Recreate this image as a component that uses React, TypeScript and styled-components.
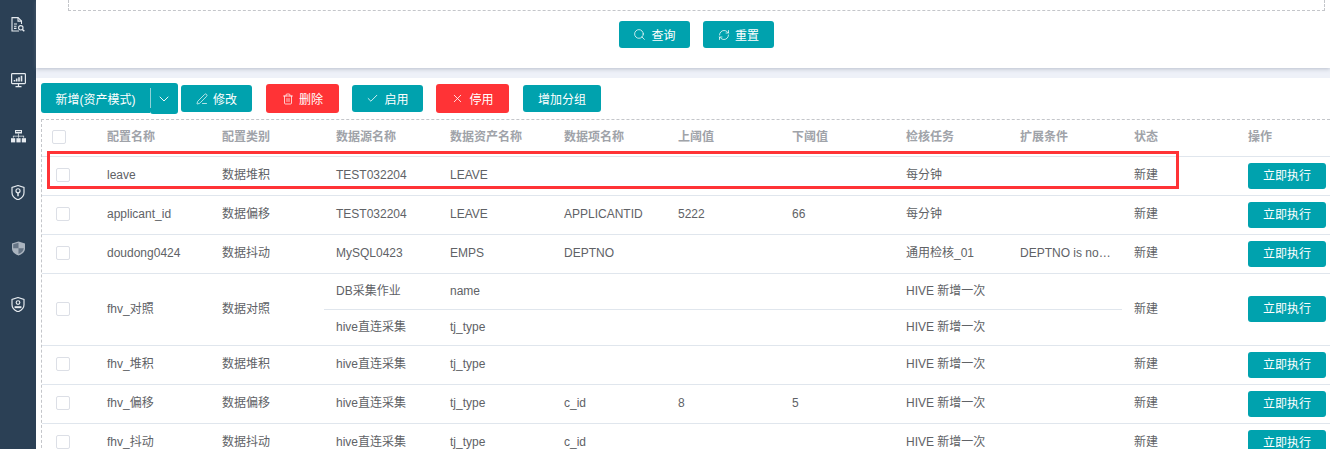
import React from "react";
import styled, { createGlobalStyle } from "styled-components";
import { Search, RefreshCw, PenLine, Trash2, Check, X, ChevronDown } from "lucide-react";

const Global = createGlobalStyle`
  html, body { margin: 0; padding: 0; height: 449px; overflow: hidden; background: #fff; }
  body { font-family: "Liberation Sans", "Noto Sans CJK SC", Arial, sans-serif; font-size: 12px; color: #606266; }
`;

const Page = styled.div`
  display: flex;
  width: 1330px;
  height: 449px;
  overflow: hidden;
  position: relative;
`;
const Sidebar = styled.nav`
  flex: 0 0 36px;
  background: #2b4055;
  display: flex;
  flex-direction: column;
  align-items: center;
  padding-top: 16px;
  gap: 40px;
`;
const NavItem = styled.div<{ $dim?: boolean }>`
  width: 16px;
  height: 16px;
  color: ${(p) => (p.$dim ? "#aab4bf" : "#e6ebf0")};
  display: flex;
  align-items: center;
  justify-content: center;
`;
const Main = styled.main`
  flex: 1;
  min-width: 0;
  display: flex;
  flex-direction: column;
  background: #eef1f8;
`;
const SearchPanel = styled.section`
  flex: none;
  height: 68px;
  background: #fff;
  box-shadow: 0 1px 4px rgba(120, 130, 150, 0.45);
  padding: 0 5px 0 32px;
  box-sizing: border-box;
  position: relative;
`;
const FormBox = styled.div`
  height: 11px;
  box-sizing: border-box;
  border: 1px dashed #c4c6ca;
  border-top: none;
`;
const SearchActions = styled.div`
  display: flex;
  justify-content: center;
  gap: 13px;
  margin-top: 10px;
`;
const Button = styled.button<{ $w: number; $h?: number; $danger?: boolean; $ml?: number }>`
  width: ${(p) => p.$w}px;
  height: ${(p) => p.$h ?? 27}px;
  margin-left: ${(p) => p.$ml ?? 0}px;
  padding: 0;
  border: none;
  border-radius: 3px;
  background: ${(p) => (p.$danger ? "#ff3336" : "#00a2ae")};
  color: #fff;
  font: inherit;
  font-size: 12px;
  display: inline-flex;
  align-items: center;
  justify-content: center;
  gap: 5px;
  flex: none;
`;
const ResultPanel = styled.section`
  margin-top: 10px;
  flex: 1;
  background: #fff;
  padding: 5px 0 0 5px;
`;
const Toolbar = styled.div`
  display: flex;
  align-items: center;
  height: 31px;
  gap: 3px;
`;
const Split = styled.div`
  display: flex;
  align-items: flex-start;
  height: 31px;
`;
const SplitMain = styled.button`
  width: 109px;
  height: 30px;
  border: none;
  padding: 0;
  border-radius: 3px 0 0 3px;
  background: #00a2ae;
  color: #fff;
  font: inherit;
`;
const SplitArrow = styled.button`
  position: relative;
  width: 28px;
  height: 31px;
  border: none;
  padding: 0;
  border-radius: 0 3px 3px 3px;
  background: #00a2ae;
  color: #fff;
  display: flex;
  align-items: center;
  justify-content: center;
  &::before {
    content: "";
    position: absolute;
    left: 0;
    top: 5px;
    width: 1px;
    height: 20px;
    background: #8fd2d8;
  }
`;
const ActionGroup = styled.div`
  display: flex;
  align-items: center;
  gap: 13px;
`;
const TableWrap = styled.div`
  margin-top: 5px;
  border-top: 1px dashed #c4c6ca;
  border-left: 1px dashed #c4c6ca;
`;
const Table = styled.table`
  width: 1288px;
  table-layout: fixed;
  border-collapse: separate;
  border-spacing: 0;
`;
const Th = styled.th`
  height: 37px;
  padding: 0 0 5px 12px;
  box-sizing: border-box;
  text-align: left;
  font-size: 12px;
  font-weight: 700;
  color: #a0a3a9;
  border-bottom: 1px solid #e0e6ed;
`;
const Td = styled.td<{ $h?: number }>`
  height: ${(p) => p.$h ?? 39}px;
  padding: 0 10px 2px 12px;
  box-sizing: border-box;
  color: #606266;
  font-size: 12px;
  line-height: 16px;
  border-bottom: 1px solid #e0e6ed;
  white-space: nowrap;
  overflow: hidden;
  text-overflow: ellipsis;
`;
const ActionCell = styled(Td)`
  padding: 0 0 1px 12px;
`;
const CheckBox = styled.span<{ $header?: boolean }>`
  display: block;
  width: 14px;
  height: 14px;
  box-sizing: border-box;
  border: 1px solid #dcdfe6;
  border-radius: 2px;
  background: #fff;
  margin-left: ${(p) => (p.$header ? 10 : 14)}px;
`;
const CheckTh = styled(Th)`
  padding: 0 0 3px 0;
`;
const CheckTd = styled(Td)`
  padding: 0 0 2px 0;
`;
const Highlight = styled.div`
  position: absolute;
  left: 47px;
  top: 151px;
  width: 1132px;
  height: 38px;
  box-sizing: border-box;
  border: 3px solid #ff3336;
  pointer-events: none;
`;

const IconDoc = () => (
  <svg width="14" height="15" viewBox="0 0 14 15" fill="none" stroke="currentColor" strokeWidth="1.1">
    <path d="M8 14H1V.6h6l3.500 3.500V7" />
    <path d="M7 .6v3.500h3.500" />
    <path d="M3 7h3M3 9.200h2.500M3 11.400h2.500" />
    <circle cx="9.800" cy="10.800" r="2.200" />
    <path d="M11.400 12.400l1.900 1.900" strokeWidth="1.400" />
  </svg>
);
const IconMonitor = () => (
  <svg width="15" height="15" viewBox="0 0 15 15" fill="none" stroke="currentColor">
    <rect x="0.6" y="0.6" width="13.8" height="10" rx="0.8" strokeWidth="1.2" />
    <path d="M3.500 8.500V7M5.700 8.500V5.500M8 8.500V4.200M10.500 8.500V2.800" strokeWidth="1.600" />
    <path d="M7.500 11v2.400M4.500 13.700h6" strokeWidth="1.200" />
  </svg>
);
const IconTree = () => (
  <svg width="15" height="13" viewBox="0 0 15 13" fill="currentColor">
    <path fillRule="evenodd" d="M4 0h7v3.600H4zM5 1v.8h5V1z" />
    <path d="M7.200 3.600h.7v2.200h5.200v2h-.7V6.500H7.900v1.300h-.7V6.500H2.600v1.300h-.7v-2h5.300z" />
    <rect x="0" y="8.200" width="4.200" height="4.200" />
    <rect x="5.400" y="8.200" width="4.200" height="4.200" />
    <rect x="10.800" y="8.200" width="4.200" height="4.200" />
  </svg>
);
const IconShieldKey = () => (
  <svg width="14" height="15" viewBox="0.8 0.3 12.400 14" fill="none" stroke="currentColor" strokeWidth="1.100">
    <path d="M7 0.800l5.600 1.800v5c0 3-2.400 5.200-5.600 6.600C3.800 12.800 1.400 10.600 1.400 7.600v-5z" />
    <circle cx="7" cy="5.700" r="1.900" />
    <path d="M7 7.600v3.200" strokeWidth="1.400" />
  </svg>
);
const IconShieldHalf = () => (
  <svg width="15" height="15" viewBox="0 0 15 15" fill="currentColor">
    <path d="M7.500 0.500L14 2.500v5c0 3.300-2.600 5.700-6.500 7C3.600 13.200 1 10.800 1 7.500v-5z" />
    <path d="M7.500 1.800v5.500H2.200V3.300zM7.500 7.300h5.300c-.2 2.600-2.300 4.600-5.300 5.800z" fill="#2b4055" opacity="0.55" />
  </svg>
);
const IconShieldUser = () => (
  <svg width="14" height="15" viewBox="0.8 0.3 12.400 14" fill="none" stroke="currentColor" strokeWidth="1.100">
    <path d="M7 0.800l5.600 1.800v5c0 3-2.400 5.200-5.600 6.600C3.800 12.800 1.400 10.600 1.400 7.600v-5z" />
    <circle cx="7" cy="5.500" r="1.700" />
    <path d="M3.800 9.800h6.400" strokeWidth="1.800" />
  </svg>
);

type Row = {
  name: string;
  type: string;
  subs: { source: string; asset: string; task: string; item?: string; up?: string; down?: string; ext?: string }[];
};
const rows: Row[] = [
  { name: "leave", type: "数据堆积", subs: [{ source: "TEST032204", asset: "LEAVE", task: "每分钟" }] },
  { name: "applicant_id", type: "数据偏移", subs: [{ source: "TEST032204", asset: "LEAVE", item: "APPLICANTID", up: "5222", down: "66", task: "每分钟" }] },
  { name: "doudong0424", type: "数据抖动", subs: [{ source: "MySQL0423", asset: "EMPS", item: "DEPTNO", task: "通用检核_01", ext: "DEPTNO is not null" }] },
  {
    name: "fhv_对照",
    type: "数据对照",
    subs: [
      { source: "DB采集作业", asset: "name", task: "HIVE 新增一次" },
      { source: "hive直连采集", asset: "tj_type", task: "HIVE 新增一次" },
    ],
  },
  { name: "fhv_堆积", type: "数据堆积", subs: [{ source: "hive直连采集", asset: "tj_type", task: "HIVE 新增一次" }] },
  { name: "fhv_偏移", type: "数据偏移", subs: [{ source: "hive直连采集", asset: "tj_type", item: "c_id", up: "8", down: "5", task: "HIVE 新增一次" }] },
  { name: "fhv_抖动", type: "数据抖动", subs: [{ source: "hive直连采集", asset: "tj_type", item: "c_id", task: "HIVE 新增一次" }] },
];
const headers = ["配置名称", "配置类别", "数据源名称", "数据资产名称", "数据项名称", "上阈值", "下阈值", "检核任务", "扩展条件", "状态", "操作"];
const widths = [53, 115, 114, 114, 114, 114, 114, 114, 114, 114, 114, 94];

export default function App() {
  return (
    <Page>
      <Global />
      <Sidebar>
        <NavItem><IconDoc /></NavItem>
        <NavItem><IconMonitor /></NavItem>
        <NavItem><IconTree /></NavItem>
        <NavItem><IconShieldKey /></NavItem>
        <NavItem $dim><IconShieldHalf /></NavItem>
        <NavItem><IconShieldUser /></NavItem>
      </Sidebar>
      <Main>
        <SearchPanel>
          <FormBox />
          <SearchActions>
            <Button $w={71}><Search size={13} strokeWidth={1.4} />查询</Button>
            <Button $w={71}><RefreshCw size={12} strokeWidth={1.5} />重置</Button>
          </SearchActions>
        </SearchPanel>
        <ResultPanel>
          <Toolbar>
            <Split>
              <SplitMain>新增(资产模式)</SplitMain>
              <SplitArrow><ChevronDown size={16} strokeWidth={1.4} /></SplitArrow>
            </Split>
            <ActionGroup>
              <Button $w={71}><PenLine size={12} strokeWidth={1.4} />修改</Button>
              <Button $w={73} $h={29} $danger $ml={1}><Trash2 size={12} strokeWidth={1.5} />删除</Button>
              <Button $w={71}><Check size={13} strokeWidth={1.5} />启用</Button>
              <Button $w={73} $h={29} $danger><X size={13} strokeWidth={1.5} />停用</Button>
              <Button $w={78} $ml={1}>增加分组</Button>
            </ActionGroup>
          </Toolbar>
          <TableWrap>
            <Table>
              <colgroup>
                {widths.map((w, i) => <col key={i} width={w} />)}
              </colgroup>
              <thead>
                <tr>
                  <CheckTh><CheckBox $header /></CheckTh>
                  {headers.map((h) => <Th key={h}>{h}</Th>)}
                  <Th />
                </tr>
              </thead>
              <tbody>
                {rows.map((r) => {
                  const span = r.subs.length;
                  const h = span > 1 ? 36 : 39;
                  return r.subs.map((s, i) => (
                    <tr key={r.name + i}>
                      {i === 0 && <CheckTd rowSpan={span} $h={h}><CheckBox /></CheckTd>}
                      {i === 0 && <Td rowSpan={span} $h={h}>{r.name}</Td>}
                      {i === 0 && <Td rowSpan={span} $h={h}>{r.type}</Td>}
                      <Td $h={h}>{s.source}</Td>
                      <Td $h={h}>{s.asset}</Td>
                      <Td $h={h}>{s.item}</Td>
                      <Td $h={h}>{s.up}</Td>
                      <Td $h={h}>{s.down}</Td>
                      <Td $h={h}>{s.task}</Td>
                      <Td $h={h}>{s.ext}</Td>
                      {i === 0 && <Td rowSpan={span} $h={h}>新建</Td>}
                      {i === 0 && (
                        <ActionCell rowSpan={span} colSpan={2} $h={h}>
                          <Button $w={78} $h={26}>立即执行</Button>
                        </ActionCell>
                      )}
                    </tr>
                  ));
                })}
              </tbody>
            </Table>
          </TableWrap>
        </ResultPanel>
      </Main>
      <Highlight />
    </Page>
  );
}
